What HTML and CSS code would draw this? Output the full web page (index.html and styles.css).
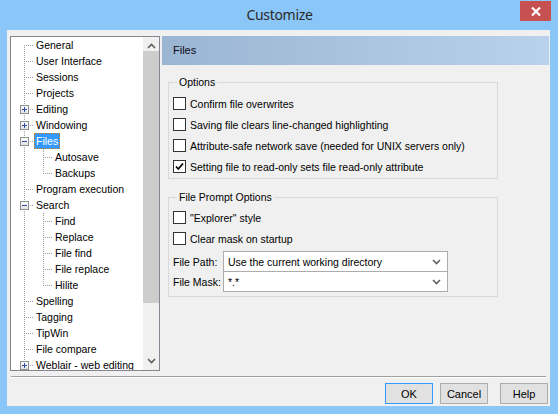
FILE: index.html
```html
<!DOCTYPE html>
<html>
<head>
<meta charset="utf-8">
<link rel="stylesheet" href="styles.css">
</head>
<body>
<div class="window">
  <div class="titlebar">
    <span class="title">Customize</span>
    <div class="close"><svg width="10" height="9" viewBox="0 0 10 9"><path d="M1 0.5 L9 8.5 M9 0.5 L1 8.5" stroke="#fff" stroke-width="2.2" fill="none"/></svg></div>
  </div>
  <div class="client">
    <div class="main">
      <div class="tree">
        <div class="tree-list">
          <div class="row"><span class="cell last t-first"></span><span class="lbl">General</span></div>
          <div class="row"><span class="cell last t-tee"></span><span class="lbl">User Interface</span></div>
          <div class="row"><span class="cell last t-tee"></span><span class="lbl">Sessions</span></div>
          <div class="row"><span class="cell last t-tee"></span><span class="lbl">Projects</span></div>
          <div class="row"><span class="cell last t-tee"><span class="exp plus"></span></span><span class="lbl">Editing</span></div>
          <div class="row"><span class="cell last t-tee"><span class="exp plus"></span></span><span class="lbl">Windowing</span></div>
          <div class="row"><span class="cell last t-tee"><span class="exp"></span></span><span class="lbl selected">Files</span></div>
          <div class="row"><span class="cell t-line"></span><span class="cell last t-tee"></span><span class="lbl">Autosave</span></div>
          <div class="row"><span class="cell t-line"></span><span class="cell last t-end"></span><span class="lbl">Backups</span></div>
          <div class="row"><span class="cell last t-tee"></span><span class="lbl">Program execution</span></div>
          <div class="row"><span class="cell last t-tee"><span class="exp"></span></span><span class="lbl">Search</span></div>
          <div class="row"><span class="cell t-line"></span><span class="cell last t-tee"></span><span class="lbl">Find</span></div>
          <div class="row"><span class="cell t-line"></span><span class="cell last t-tee"></span><span class="lbl">Replace</span></div>
          <div class="row"><span class="cell t-line"></span><span class="cell last t-tee"></span><span class="lbl">File find</span></div>
          <div class="row"><span class="cell t-line"></span><span class="cell last t-tee"></span><span class="lbl">File replace</span></div>
          <div class="row"><span class="cell t-line"></span><span class="cell last t-end"></span><span class="lbl">Hilite</span></div>
          <div class="row"><span class="cell last t-tee"></span><span class="lbl">Spelling</span></div>
          <div class="row"><span class="cell last t-tee"></span><span class="lbl">Tagging</span></div>
          <div class="row"><span class="cell last t-tee"></span><span class="lbl">TipWin</span></div>
          <div class="row"><span class="cell last t-tee"></span><span class="lbl">File compare</span></div>
          <div class="row"><span class="cell last t-tee"><span class="exp plus"></span></span><span class="lbl">Weblair - web editing</span></div>
        </div>
        <div class="scrollbar">
          <div class="sb-btn sb-up"><svg width="9" height="6" viewBox="0 0 9 6"><path d="M1 5 L4.5 1.5 L8 5" stroke="#606060" stroke-width="1.6" fill="none"/></svg></div>
          <div class="sb-thumb"></div>
          <div class="sb-track"></div>
          <div class="sb-btn sb-down"><svg width="9" height="6" viewBox="0 0 9 6"><path d="M1 1 L4.5 4.5 L8 1" stroke="#606060" stroke-width="1.6" fill="none"/></svg></div>
        </div>
      </div>
      <div class="panel">
        <div class="panel-head">Files</div>
        <fieldset class="group g-options">
          <legend>Options</legend>
          <div class="check"><span class="box"></span>Confirm file overwrites</div>
          <div class="check"><span class="box"></span>Saving file clears line-changed highlighting</div>
          <div class="check"><span class="box"></span>Attribute-safe network save (needed for UNIX servers only)</div>
          <div class="check"><span class="box"><svg width="11" height="11" viewBox="0 0 11 11"><path d="M2 5.5 L4.3 8 L9 2.5" stroke="#000" stroke-width="1.8" fill="none"/></svg></span>Setting file to read-only sets file read-only attribute</div>
        </fieldset>
        <fieldset class="group g-prompt">
          <legend>File Prompt Options</legend>
          <div class="check"><span class="box"></span>"Explorer" style</div>
          <div class="check"><span class="box"></span>Clear mask on startup</div>
          <div class="field first">
            <span class="field-label">File Path:</span>
            <div class="combo"><span class="combo-text">Use the current working directory</span><svg width="9" height="6" viewBox="0 0 9 6"><path d="M1 1 L4.5 4.5 L8 1" stroke="#606060" stroke-width="1.6" fill="none"/></svg></div>
          </div>
          <div class="field second">
            <span class="field-label">File Mask:</span>
            <div class="combo"><span class="combo-text">*.*</span><svg width="9" height="6" viewBox="0 0 9 6"><path d="M1 1 L4.5 4.5 L8 1" stroke="#606060" stroke-width="1.6" fill="none"/></svg></div>
          </div>
        </fieldset>
      </div>
    </div>
    <div class="separator"></div>
    <div class="buttons">
      <div class="btn btn-default">OK</div>
      <div class="btn btn-cancel">Cancel</div>
      <div class="btn btn-help">Help</div>
    </div>
  </div>
</div>
</body>
</html>
```
FILE: styles.css
```css
* { box-sizing: border-box; }
html, body { margin: 0; padding: 0; }
body {
  width: 558px;
  height: 414px;
  overflow: hidden;
  font-family: "Liberation Sans", Arial, sans-serif;
  font-size: 10.5px;
  color: #000;
}
.window {
  width: 558px;
  height: 414px;
  background: #8bc6f8;
  display: flex;
  flex-direction: column;
}
.titlebar {
  position: relative;
  height: 30px;
  flex: none;
  display: flex;
  align-items: center;
  justify-content: center;
}
.title {
  font-family: "Noto Sans", "Open Sans", sans-serif;
  font-size: 14px;
  letter-spacing: -0.3px;
  color: #2a2a2a;
  margin-top: -1px;
  margin-left: 1px;
}
.close {
  position: absolute;
  left: 520px;
  top: 1px;
  width: 31px;
  height: 20px;
  background: #c75050;
  display: flex;
  align-items: center;
  justify-content: center;
}
.client {
  margin: 0 8px 8px 7px;
  height: 376px;
  background: #f0f0f0;
  display: flex;
  flex-direction: column;
}
.main {
  display: flex;
  padding: 6px 1px 0 3px;
  gap: 2px;
  height: 341px;
}
.tree {
  width: 150px;
  height: 335px;
  border: 1px solid #828790;
  background: #fff;
  display: flex;
  overflow: hidden;
  flex: none;
}
.tree-list {
  flex: 1;
  overflow: hidden;
}
.row {
  height: 16px;
  display: flex;
  align-items: center;
  white-space: nowrap;
}
.cell {
  width: 19px;
  height: 16px;
  flex: none;
  display: flex;
  align-items: center;
  --dv: repeating-linear-gradient(to bottom, #a0a0a0 0 1px, transparent 1px 2px);
  --dh: repeating-linear-gradient(to right, #a0a0a0 0 1px, transparent 1px 2px);
}
.cell.last { width: 23px; }
.t-line { background: var(--dv) 13px 0 / 1px 16px no-repeat; }
.t-tee {
  background: var(--dv) 13px 0 / 1px 16px no-repeat, var(--dh) 15px 8px / 8px 1px no-repeat;
}
.t-end {
  background: var(--dv) 13px 0 / 1px 9px no-repeat, var(--dh) 15px 8px / 8px 1px no-repeat;
}
.t-first {
  background: var(--dv) 13px 8px / 1px 8px no-repeat, var(--dh) 15px 8px / 8px 1px no-repeat;
}
.exp {
  width: 9px;
  height: 9px;
  margin-left: 9px;
  margin-top: 1px;
  border: 1px solid #919191;
  display: block;
  background-image:
    linear-gradient(#2d4e9c, #2d4e9c),
    linear-gradient(#fdfdfd, #e4e4e4);
  background-size: 5px 1px, 100% 100%;
  background-position: 1px 3px, 0 0;
  background-repeat: no-repeat;
}
.exp.plus {
  background-image:
    linear-gradient(#2d4e9c, #2d4e9c),
    linear-gradient(#2d4e9c, #2d4e9c),
    linear-gradient(#fdfdfd, #e4e4e4);
  background-size: 5px 1px, 1px 5px, 100% 100%;
  background-position: 1px 3px, 3px 1px, 0 0;
}
.lbl {
  padding: 0 2px;
  height: 16px;
  line-height: 16px;
}
.lbl.selected {
  background: #3399ff;
  color: #fff;
  outline: 1px dotted #d08020;
  outline-offset: -1px;
}
.scrollbar {
  width: 16px;
  flex: none;
  background: #f0f0f0;
  display: flex;
  flex-direction: column;
}
.sb-btn {
  display: flex;
  align-items: center;
  justify-content: center;
  flex: none;
}
.sb-up { height: 14px; padding-top: 3px; }
.sb-down { height: 17px; padding-bottom: 2px; }
.sb-thumb {
  height: 252px;
  background: #cdcdcd;
  flex: none;
}
.sb-track { flex: 1; }
.panel {
  flex: 1;
  display: flex;
  flex-direction: column;
}
.panel-head {
  height: 29px;
  flex: none;
  background: linear-gradient(to right, #9ab5d2, #b9d1eb);
  padding-left: 11px;
  line-height: 29px;
  font-size: 11px;
  color: #0a0a14;
}
.group {
  margin: 10px 0 0 6px;
  width: 330px;
  border: 1px solid #d9d9d9;
  padding: 0 0 1px 4px;
}
.group legend {
  padding: 0 2px;
  margin-left: 4px;
  line-height: 14px;
  height: 14px;
}
.g-options { padding-top: 4px; }
.g-prompt { margin-top: 11px; padding-top: 3px; padding-bottom: 4px; }
.check {
  height: 21px;
  display: flex;
  align-items: center;
  gap: 4px;
  white-space: nowrap;
}
.box {
  width: 13px;
  height: 13px;
  border: 1px solid #333;
  background: #fff;
  flex: none;
  display: flex;
  align-items: center;
  justify-content: center;
}
.field {
  display: flex;
  align-items: center;
  height: 21px;
}
.field.first { margin-top: 2px; }
.field.second { margin-top: -1px; }
.field-label {
  width: 50px;
  flex: none;
  padding-top: 1px;
  white-space: nowrap;
}
.combo {
  width: 225px;
  height: 21px;
  border: 1px solid #acacac;
  background: #fff;
  display: flex;
  align-items: center;
  justify-content: space-between;
  padding: 0 6px 0 4px;
}
.combo-text { padding-top: 1px; }
.separator {
  height: 2px;
  margin: 5px 4px 0 4px;
  border-top: 1px solid #a0a0a0;
  border-bottom: 1px solid #ffffff;
}
.buttons {
  display: flex;
  justify-content: flex-end;
  padding-right: 2px;
  margin-top: 5px;
}
.btn {
  width: 48px;
  height: 21px;
  border: 1px solid #adadad;
  background: #e1e1e1;
  display: flex;
  align-items: center;
  justify-content: center;
  padding-top: 1px;
  font-size: 11px;
}
.btn-default { border-color: #3399ff; }
.btn-cancel { margin-left: 7px; }
.btn-help { margin-left: 12px; }
```
